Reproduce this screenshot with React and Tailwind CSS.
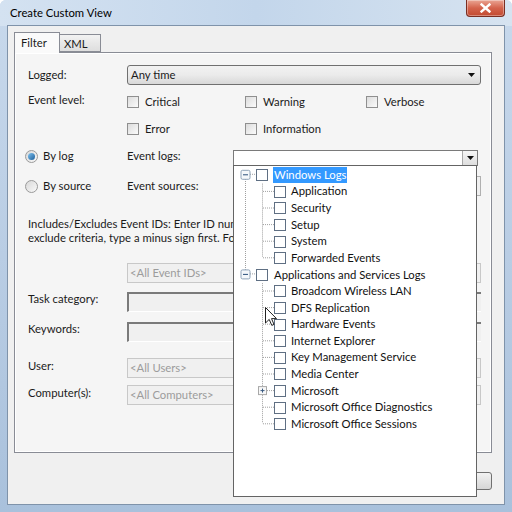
import React from 'react';

const font = { fontFamily: '"Segoe UI", Lato, "Liberation Sans", sans-serif' };

function Check({ className = '' }) {
  return (
    <span
      className={`inline-block w-[12px] h-[12px] border border-[#8f8f8f] bg-gradient-to-br from-[#dcdcdc] to-[#fbfbfb] shrink-0 ${className}`}
    />
  );
}

function LevelBox({ label }) {
  return (
    <div className="flex items-center gap-[6px]">
      <Check />
      <span>{label}</span>
    </div>
  );
}

function Radio({ on }) {
  return (
    <span className="w-[13px] h-[13px] rounded-full border border-[#9a9a9a] bg-gradient-to-br from-[#d8d8d8] to-[#fafafa] flex items-center justify-center shrink-0">
      {on && <span className="w-[7px] h-[7px] rounded-full bg-gradient-to-br from-[#7fc3f0] to-[#1b5f9a]" />}
    </span>
  );
}

function Arrow() {
  return (
    <svg width="7" height="4" viewBox="0 0 7 4">
      <path d="M0 0H7L3.5 4Z" fill="#111" />
    </svg>
  );
}

function GrayBox({ text }) {
  return (
    <div className="w-[354px] h-[20px] border border-[#c8c8c8] bg-[#f0f0f0] text-[#9c9c9c] flex items-center pl-[2px]">
      {text}
    </div>
  );
}

function Sunken() {
  return (
    <div className="w-[354px] h-[20px] border-t-2 border-l-2 border-[#7a7a7a] border-b border-b-white bg-[#f0f0f0]" />
  );
}

const tree = [
  { label: 'Windows Logs', root: true, selected: true },
  { label: 'Application' },
  { label: 'Security' },
  { label: 'Setup' },
  { label: 'System' },
  { label: 'Forwarded Events' },
  { label: 'Applications and Services Logs', root: true },
  { label: 'Broadcom Wireless LAN' },
  { label: 'DFS Replication' },
  { label: 'Hardware Events' },
  { label: 'Internet Explorer' },
  { label: 'Key Management Service' },
  { label: 'Media Center' },
  { label: 'Microsoft', plus: true },
  { label: 'Microsoft Office Diagnostics' },
  { label: 'Microsoft Office Sessions' },
];

const ROW = 16.6;
const cy = (i) => 8.3 + ROW * i;

function TreeLines() {
  const dots = { stroke: '#a0a0a0', strokeWidth: 1, strokeDasharray: '1 1', fill: 'none' };
  const kids1 = [1, 2, 3, 4, 5];
  const kids2 = [7, 8, 9, 10, 11, 12, 13, 14, 15];
  return (
    <svg className="absolute left-0 top-0" width="60" height="280">
      <line x1="11.5" y1="13" x2="11.5" y2={cy(6) - 4} {...dots} />
      <line x1="16" y1={cy(0)} x2="22" y2={cy(0)} {...dots} />
      <line x1="16" y1={cy(6)} x2="22" y2={cy(6)} {...dots} />
      <line x1="28.5" y1={ROW + 1} x2="28.5" y2={cy(5)} {...dots} />
      <line x1="28.5" y1={ROW * 7 + 1} x2="28.5" y2={cy(15)} {...dots} />
      {kids1.concat(kids2).map((i) => (
        <line key={i} x1={i === 13 ? 33 : 29} y1={cy(i) + 0.5} x2="40" y2={cy(i) + 0.5} {...dots} />
      ))}
      {[0, 6].map((i) => (
        <g key={i}>
          <rect x="7" y={cy(i) - 4} width="9" height="9" rx="1.5" fill="#f4f7fa" stroke="#8fa3b8" />
          <line x1="9" y1={cy(i) + 0.5} x2="14" y2={cy(i) + 0.5} stroke="#2b4f7a" />
        </g>
      ))}
      <rect x="24.5" y={cy(13) - 3.5} width="8" height="8" fill="#f7f7f7" stroke="#a8a8a8" />
      <line x1="26.5" y1={cy(13) + 0.5} x2="30.5" y2={cy(13) + 0.5} stroke="#3a5a80" />
      <line x1="28.5" y1={cy(13) - 1.5} x2="28.5" y2={cy(13) + 2.5} stroke="#3a5a80" />
    </svg>
  );
}

function TreeList() {
  return (
    <div className="absolute -left-[1px] top-full w-[244px] h-[332px] bg-white border border-[#646464] z-10 text-[#111]">
      <div className="relative pt-[1px]">
        <TreeLines />
        {tree.map((n) => (
          <div key={n.label} className="flex items-center h-[16.6px]">
            {n.root ? (
              <>
                <span className="w-[22px] shrink-0" />
                <span className="w-[12px] h-[12px] border border-[#5f6f83] bg-white shrink-0" />
                <span
                  className={`ml-[5px] px-[1px] leading-[16px] ${n.selected ? 'bg-[#3399ff] text-white' : ''}`}
                >
                  {n.label}
                </span>
              </>
            ) : (
              <>
                <span className="w-[40px] shrink-0" />
                <span className="w-[12px] h-[12px] border border-[#5f6f83] bg-white shrink-0" />
                <span className="ml-[5px]">{n.label}</span>
              </>
            )}
          </div>
        ))}
      </div>
    </div>
  );
}

function Cursor() {
  return (
    <svg className="absolute left-[265px] top-[307px] z-20" width="13" height="20" viewBox="0 0 13 20">
      <path d="M0.5 0.5V16L4.2 12.4L6.8 18.4L9 17.4L6.5 11.6H11.5Z" fill="#fff" stroke="#222" strokeWidth="1" />
    </svg>
  );
}

export default function App() {
  return (
    <div
      className="relative w-[512px] h-[512px] overflow-hidden bg-gradient-to-b from-[#c8d9ec] via-[#b9cde4] to-[#a9c1dc] text-[11.3px] text-[#1b1b1b] rounded-t-[6px]"
      style={font}
    >
      {/* title bar */}
      <div className="h-[26px] flex items-start justify-between bg-gradient-to-r from-[#d4e2f1] via-[#c3d6eb] to-[#d6e3f0]">
        <span className="pl-[10px] pt-[5px] text-black">Create Custom View</span>
        <div className="mr-[7px] w-[39px] h-[17px] rounded-b-[4px] border border-t-0 border-[#7a2e22] bg-gradient-to-b from-[#e9a594] via-[#d4634c] to-[#c24a30] flex items-center justify-center shadow-[inset_0_0_0_1px_rgba(255,255,255,0.35)]">
          <svg width="11" height="10" viewBox="0 0 11 10">
            <path d="M1.5 1.5L9.5 8.5M9.5 1.5L1.5 8.5" stroke="#fff" strokeWidth="2.4" strokeLinecap="square" />
          </svg>
        </div>
      </div>

      {/* client area */}
      <div className="absolute left-[7px] right-[7px] top-[25px] bottom-[7px] border border-[#7f93aa] bg-[#f0f0f0] pl-[6px] pr-[12px] pt-[6px]">
        {/* tabs */}
        <div className="flex items-end h-[20px] relative z-[1]">
          <div className="w-[46px] h-[21px] -mb-[1px] border border-b-0 border-[#898c95] bg-[#fafafa] pl-[6px] pt-[2px]">
            Filter
          </div>
          <div className="w-[41px] h-[18px] border border-l-0 border-[#898c95] bg-gradient-to-b from-[#f2f2f2] to-[#dedede] pl-[4px] pt-[1px]">
            XML
          </div>
        </div>

        {/* tab panel */}
        <div className="h-[401px] border border-[#898c95] bg-[#f5f5f5] shadow-[inset_0_0_0_1px_#ffffff] pl-[13px] pr-[10px]">
          <div className="flex items-center h-[20px] mt-[12px]">
            <span className="w-[99px]">Logged:</span>
            <div className="flex-1 h-[20px] rounded-[3px] border border-[#707070] bg-gradient-to-b from-[#f2f2f2] via-[#ebebeb] to-[#d8d8d8] flex items-center justify-between pl-[3px] pr-[5px]">
              <span>Any time</span>
              <Arrow />
            </div>
          </div>

          <div className="flex items-start h-[18px] mt-[8px]">
            <span className="w-[99px] leading-[14px]">Event level:</span>
            <div className="grid grid-cols-[118px_121px_auto] h-[18px]">
              <LevelBox label="Critical" />
              <LevelBox label="Warning" />
              <LevelBox label="Verbose" />
            </div>
          </div>
          <div className="flex items-center h-[18px] mt-[9px]">
            <span className="w-[99px]" />
            <div className="grid grid-cols-[118px_121px_auto] h-[18px]">
              <LevelBox label="Error" />
              <LevelBox label="Information" />
            </div>
          </div>

          <div className="flex items-start h-[18px] mt-[9px] -ml-[3px]">
            <div className="w-[102px] flex items-center gap-[5px] h-[18px]">
              <Radio on />
              <span>By log</span>
            </div>
            <span className="w-[106px] h-[18px] flex items-center">Event logs:</span>
            <div className="relative w-[245px] h-[16px] mt-[3px] border border-[#7a7a7a] bg-white flex justify-end">
              <div className="w-[15px] h-[14px] border-l border-[#a8a8a8] bg-gradient-to-b from-[#f6f6f6] to-[#dedede] flex items-center justify-center">
                <Arrow />
              </div>
              <TreeList />
            </div>
          </div>

          <div className="flex items-center h-[18px] mt-[12px] -ml-[3px]">
            <div className="w-[102px] flex items-center gap-[5px]">
              <Radio />
              <span>By source</span>
            </div>
            <span className="w-[106px]">Event sources:</span>
            <div className="flex-1 h-[20px] border border-[#b0b0b0] bg-[#f0f0f0]" />
          </div>

          <div className="mt-[22px] leading-[14px] whitespace-nowrap overflow-hidden w-[205px]">
            <div>Includes/Excludes Event IDs: Enter ID numbers and/or ID ranges separated by commas. To</div>
            <div>exclude criteria, type a minus sign first. For example 1,3,5-99,-76</div>
          </div>

          <div className="flex items-center h-[20px] mt-[18px]">
            <span className="w-[99px]" />
            <GrayBox text="<All Event IDs>" />
          </div>
          <div className="flex items-start h-[20px] mt-[9px]">
            <span className="w-[99px] leading-[14px]">Task category:</span>
            <Sunken />
          </div>
          <div className="flex items-start h-[20px] mt-[10px]">
            <span className="w-[99px] leading-[14px]">Keywords:</span>
            <Sunken />
          </div>
          <div className="flex items-start h-[20px] mt-[16px]">
            <span className="w-[99px] leading-[14px] pt-[1px]">User:</span>
            <GrayBox text="<All Users>" />
          </div>
          <div className="flex items-start h-[20px] mt-[7px]">
            <span className="w-[99px] leading-[14px] pt-[1px]">Computer(s):</span>
            <GrayBox text="<All Computers>" />
          </div>
        </div>

        {/* dialog buttons */}
        <div className="flex justify-end gap-[6px] mt-[19px]">
          <div className="w-[75px] h-[18px] rounded-[3px] border border-[#707070] bg-gradient-to-b from-[#f2f2f2] to-[#d6d6d6] flex items-center justify-center">OK</div>
          <div className="w-[75px] h-[18px] rounded-[3px] border border-[#707070] bg-gradient-to-b from-[#f2f2f2] to-[#d6d6d6] flex items-center justify-center">Cancel</div>
        </div>
      </div>

      <Cursor />
    </div>
  );
}
